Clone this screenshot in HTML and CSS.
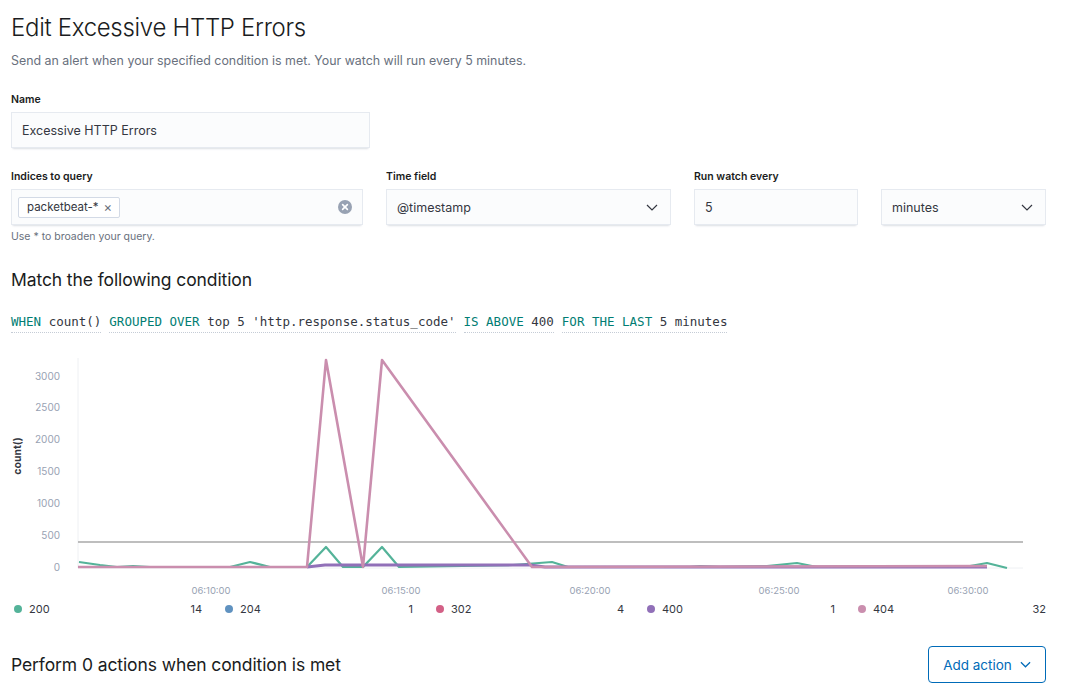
FILE: index.html
```html
<!DOCTYPE html>
<html>
<head>
<meta charset="utf-8">
<link rel="stylesheet" href="styles.css">
</head>
<body>
<div class="page">
  <h1 class="title">Edit Excessive HTTP Errors</h1>
  <p class="subtitle">Send an alert when your specified condition is met. Your watch will run every 5 minutes.</p>

  <div class="field name-field">
    <label class="label">Name</label>
    <div class="input">Excessive HTTP Errors</div>
  </div>

  <div class="row">
    <div class="field">
      <label class="label">Indices to query</label>
      <div class="input combo">
        <span class="pill">packetbeat-* <span class="pill-x">×</span></span>
        <span class="clear">
          <svg width="14" height="14" viewBox="0 0 14 14"><circle cx="7" cy="7" r="7" fill="#98A2B3"/><path d="M4.6 4.6l4.8 4.8M9.4 4.6l-4.8 4.8" stroke="#fff" stroke-width="1.6" stroke-linecap="round"/></svg>
        </span>
      </div>
      <div class="help">Use * to broaden your query.</div>
    </div>
    <div class="field">
      <label class="label">Time field</label>
      <div class="input select">@timestamp
        <svg class="chev" width="12" height="7" viewBox="0 0 12 7"><path d="M1 1l5 5 5-5" fill="none" stroke="#343741" stroke-width="1.2"/></svg>
      </div>
    </div>
    <div class="field">
      <label class="label">Run watch every</label>
      <div class="input">5</div>
    </div>
    <div class="field">
      <label class="label label-empty">&nbsp;</label>
      <div class="input select">minutes
        <svg class="chev" width="12" height="7" viewBox="0 0 12 7"><path d="M1 1l5 5 5-5" fill="none" stroke="#343741" stroke-width="1.2"/></svg>
      </div>
    </div>
  </div>

  <h2 class="section-title match-title">Match the following condition</h2>
  <div class="expr">
    <span class="seg"><span class="kw">WHEN</span> count()</span><span class="seg"><span class="kw">GROUPED OVER</span> top 5 'http.response.status_code'</span><span class="seg"><span class="kw">IS ABOVE</span> 400</span><span class="seg"><span class="kw">FOR THE LAST</span> 5 minutes</span>
  </div>

  <svg class="chart" width="1035" height="245" viewBox="11 355 1035 245">
    <line x1="78" y1="358" x2="78" y2="568" stroke="#EEF0F3" stroke-width="1"/>
    <line x1="78" y1="568" x2="1023" y2="568" stroke="#EEF0F3" stroke-width="1"/>
    <g class="ytick">
      <text x="60" y="380">3000</text>
      <text x="60" y="411">2500</text>
      <text x="60" y="443">2000</text>
      <text x="60" y="475">1500</text>
      <text x="60" y="507">1000</text>
      <text x="60" y="539">500</text>
      <text x="60" y="571">0</text>
    </g>
    <text class="ylabel" transform="translate(21 456) rotate(-90)">count()</text>
    <g class="xtick">
      <text x="211" y="594">06:10:00</text>
      <text x="401" y="594">06:15:00</text>
      <text x="590" y="594">06:20:00</text>
      <text x="779" y="594">06:25:00</text>
      <text x="968" y="594">06:30:00</text>
    </g>
    <line x1="78" y1="542" x2="1023" y2="542" stroke="#A8A8A8" stroke-width="1.6"/>
    <polyline fill="none" stroke="#54B399" stroke-width="2.2" stroke-linejoin="round" points="79,562 100,565 117,567 133,566 150,567 230,567 250,562 270,567 307,567 326,547 343,567 363,567 382,547 399,567 513,565 552,562 568,567 690,567 700,566 720,567 767,566 797,563 817,567 873,566 970,566 987,563 1007,568"/>
    <polyline fill="none" stroke="#9170B8" stroke-width="3" stroke-linejoin="round" points="307,567 325,565 530,565 545,567 987,567"/>
    <polyline fill="none" stroke="#CA8EAE" stroke-width="2.6" stroke-linejoin="round" points="78,567 307,567 326,360 363,567 382,360 532,567 987,566"/>
  </svg>

  <div class="legend">
    <div class="leg"><span class="dot" style="background:#54B399"></span><span class="leg-name">200</span><span class="leg-val">14</span></div>
    <div class="leg"><span class="dot" style="background:#6092C0"></span><span class="leg-name">204</span><span class="leg-val">1</span></div>
    <div class="leg"><span class="dot" style="background:#D36086"></span><span class="leg-name">302</span><span class="leg-val">4</span></div>
    <div class="leg"><span class="dot" style="background:#9170B8"></span><span class="leg-name">400</span><span class="leg-val">1</span></div>
    <div class="leg"><span class="dot" style="background:#CA8EAE"></span><span class="leg-name">404</span><span class="leg-val">32</span></div>
  </div>

  <div class="actions">
    <h2 class="section-title">Perform 0 actions when condition is met</h2>
    <button class="btn">Add action
      <svg width="11" height="7" viewBox="0 0 12 7"><path d="M1 1l5 5 5-5" fill="none" stroke="#006BB8" stroke-width="1.3"/></svg>
    </button>
  </div>
</div>
</body>
</html>
```

FILE: styles.css
```css
* { box-sizing: border-box; }
html, body { margin: 0; padding: 0; background: #fff; }
body {
  font-family: Inter, "Noto Sans", sans-serif;
  color: #1A1C21;
}
.page {
  width: 1066px;
  padding: 12px 20px 0 11px;
}
.title {
  margin: 0;
  font-size: 24px;
  font-weight: 300;
  line-height: 32px;
  letter-spacing: -0.3px;
}
.subtitle {
  margin: 9px 0 0;
  font-size: 12.4px;
  line-height: 16px;
  color: #69707D;
}
.field { display: flex; flex-direction: column; }
.name-field { margin-top: 24px; width: 359px; }
.label {
  font-size: 10.5px;
  font-weight: 600;
  line-height: 14px;
  margin-bottom: 5px;
  color: #1A1C21;
}
.input {
  height: 36px;
  background: #FBFCFD;
  border: 1px solid #E6EAF0;
  box-shadow: 0 1px 1px -1px rgba(152,162,179,.3), 0 3px 2px -2px rgba(152,162,179,.3);
  display: flex;
  align-items: center;
  padding: 0 10px;
  font-size: 12.5px;
  color: #343741;
}
.row {
  display: grid;
  grid-template-columns: 352px 285px 164px 165px;
  column-gap: 23px;
  margin-top: 22px;
}
.combo { padding: 0 6px; justify-content: space-between; }
.pill {
  display: inline-flex;
  align-items: center;
  height: 21px;
  padding: 0 7px 0 8px;
  border: 1px solid #D3DAE6;
  background: #fff;
  border-radius: 2px;
  font-size: 11.5px;
  color: #343741;
}
.pill-x { margin-left: 5px; color: #69707D; font-size: 13px; }
.clear { display: flex; margin-right: 4px; }
.select { justify-content: space-between; padding-right: 12px; }
.chev { flex: none; }
.help {
  margin-top: 6px;
  font-size: 10.5px;
  line-height: 12px;
  color: #69707D;
}
.section-title {
  margin: 0;
  font-size: 17.5px;
  font-weight: 400;
  line-height: 24px;
  letter-spacing: -0.1px;
  color: #1A1C21;
}
.match-title { margin-top: 25px; }
.expr {
  margin-top: 22px;
  font-family: "DejaVu Sans Mono", "Liberation Mono", monospace;
  font-size: 12.5px;
  line-height: 16px;
  color: #343741;
  white-space: nowrap;
}
.seg {
  display: inline-block;
  padding-bottom: 2px;
  border-bottom: 1px dotted #C5CCD6;
  margin-right: 8px;
}
.kw { color: #017D73; }
.chart { display: block; margin-top: 22px; }
.ytick text {
  font-family: Inter, sans-serif;
  font-size: 10px;
  fill: #98A2B3;
  text-anchor: end;
}
.xtick text {
  font-family: Inter, sans-serif;
  font-size: 9.5px;
  fill: #98A2B3;
  text-anchor: middle;
}
.ylabel {
  font-family: Inter, sans-serif;
  font-size: 10.5px;
  font-weight: 700;
  fill: #343741;
  text-anchor: middle;
}
.legend {
  display: grid;
  grid-template-columns: repeat(5, 1fr);
  column-gap: 20px;
  height: 18px;
}
.leg {
  display: flex;
  align-items: center;
  font-size: 11px;
  color: #343741;
}
.dot {
  width: 8px;
  height: 8px;
  border-radius: 50%;
  margin: 0 7px 0 3px;
  flex: none;
}
.leg-val { margin-left: auto; }
.actions {
  margin-top: 28px;
  display: flex;
  justify-content: space-between;
  align-items: center;
}
.btn {
  width: 118px;
  height: 37px;
  border: 1px solid #006BB8;
  border-radius: 4px;
  background: #fff;
  color: #006BB8;
  font-family: Inter, sans-serif;
  font-size: 13.5px;
  display: flex;
  align-items: center;
  justify-content: center;
  gap: 8px;
  padding: 0;
}
```
